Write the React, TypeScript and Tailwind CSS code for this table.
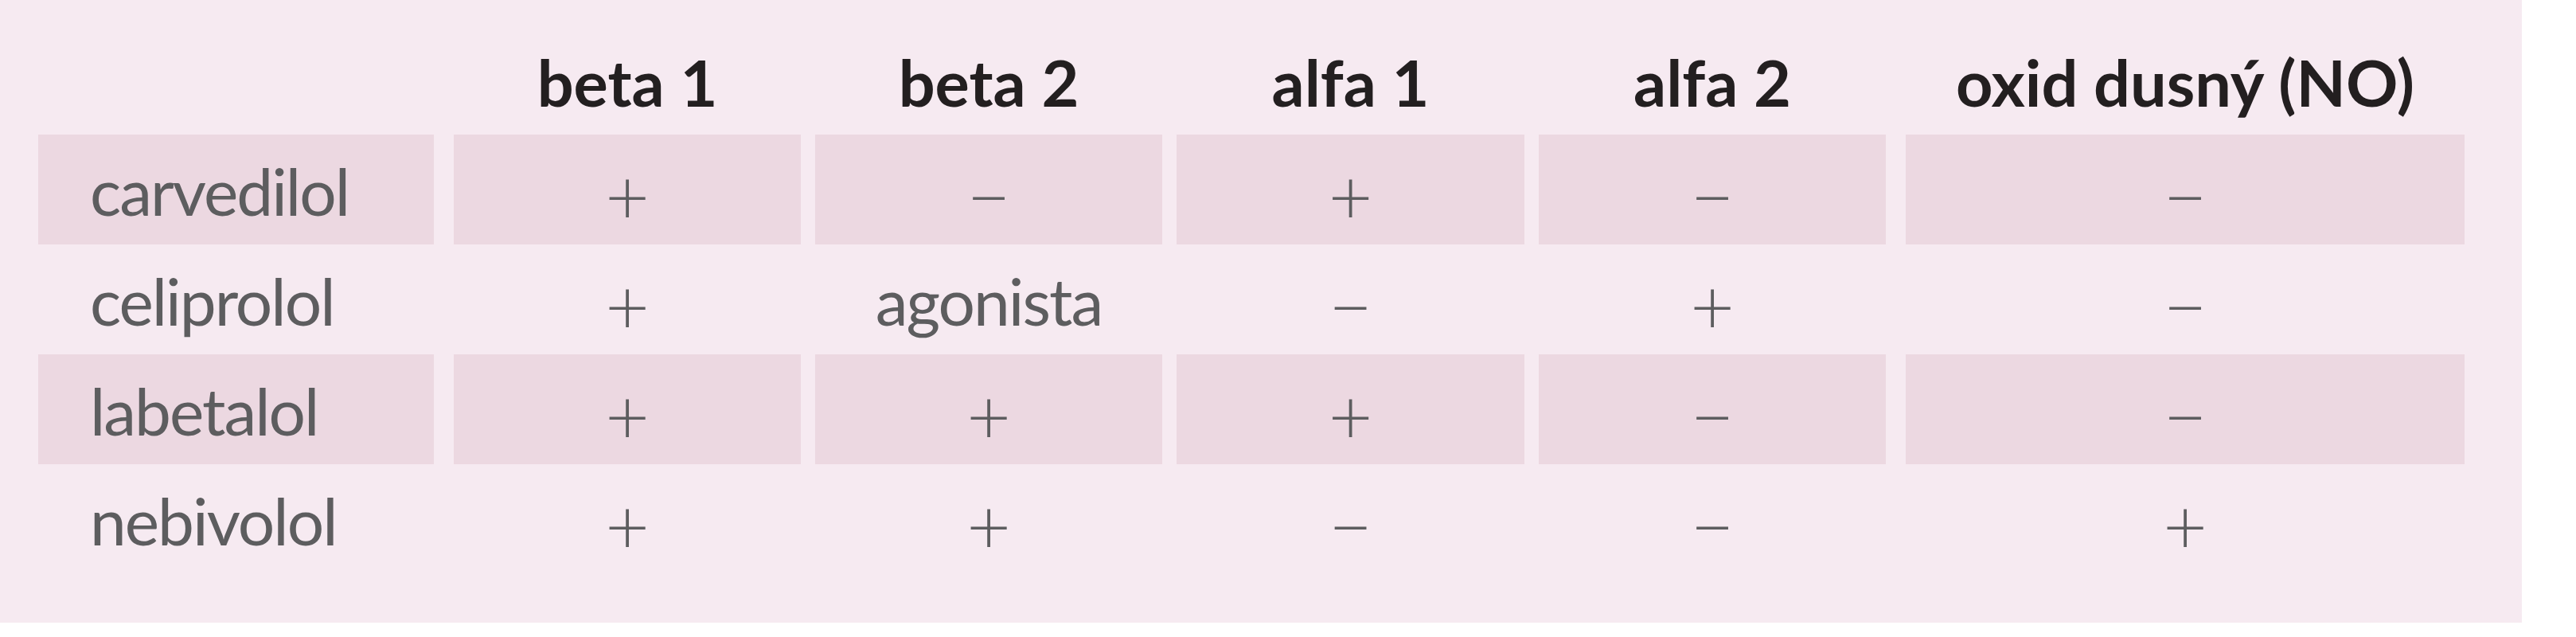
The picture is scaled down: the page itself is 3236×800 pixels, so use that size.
const COLUMNS = ['beta 1', 'beta 2', 'alfa 1', 'alfa 2', 'oxid dusný (NO)'];

const ROWS = [
  { name: 'carvedilol', values: ['+', '−', '+', '−', '−'], shaded: true },
  { name: 'celiprolol', values: ['+', 'agonista', '−', '+', '−'], shaded: false },
  { name: 'labetalol', values: ['+', '+', '+', '−', '−'], shaded: true },
  { name: 'nebivolol', values: ['+', '+', '−', '−', '+'], shaded: false },
];

// value column widths, the last one is the wide NO column
const WIDTHS = ['w-[436px]', 'w-[436px]', 'w-[437px]', 'w-[436px]', 'w-[702px]'];
const SPACING = ['ml-[7px]', '', '', '', 'ml-[7px]'];

const isSign = (v: string) => v === '+' || v === '−';

export default function App() {
  return (
    <div className="w-[3236px] h-[800px] bg-white font-['Lato',sans-serif]">
      <div className="w-[3168px] h-[782px] bg-[#f6eaf1] pl-[48px]">
        <div className="flex gap-[18px] h-[169px] pt-[62px] leading-none text-[81px] font-bold text-[#231f20]">
          <div className="w-[497px] shrink-0" />
          {COLUMNS.map((col, i) => (
            <div key={col} className={`${WIDTHS[i]} ${SPACING[i]} shrink-0 text-center`}>
              {col}
            </div>
          ))}
        </div>

        {ROWS.map((row) => (
          <div key={row.name} className="flex gap-[18px] h-[138px] leading-none text-[#5d5d5f]">
            <div
              className={`w-[497px] shrink-0 pt-[29px] pl-[65px] text-[82px] tracking-[-2px] ${row.shaded ? 'bg-[#ecd8e1]' : ''}`}
            >
              {row.name}
            </div>
            {row.values.map((v, i) => (
              <div
                key={i}
                className={`${WIDTHS[i]} ${SPACING[i]} shrink-0 text-center ${row.shaded ? 'bg-[#ecd8e1]' : ''} ${
                  isSign(v) ? 'pt-[28px] text-[96px] font-light' : 'pt-[29px] text-[82px] tracking-[-2px]'
                }`}
              >
                {v}
              </div>
            ))}
          </div>
        ))}
      </div>
    </div>
  );
}
